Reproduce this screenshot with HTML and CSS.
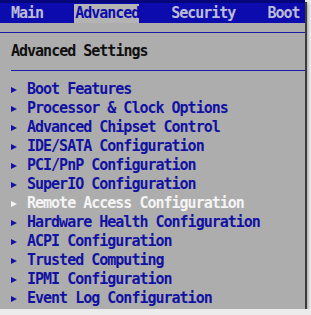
FILE: index.html
```html
<!DOCTYPE html>
<html lang="en">
<head>
  <meta charset="UTF-8">
  <meta name="viewport" content="width=device-width, initial-scale=1">
  <title>BIOS Setup - Advanced</title>
  <link rel="stylesheet" href="styles.css">
</head>
<body>
  <div class="screen">
    <!-- Top menu -->
    <div class="tabs">
      <span class="tab">Main</span>
      <span class="tab active">Advanced</span>
      <span class="tab">Security</span>
      <span class="tab">Boot</span>
    </div>
    <div class="rule"></div>
    <h1 class="title">Advanced Settings</h1>
    <div class="rule inset"></div>
    <!-- Submenus -->
    <ul class="menu">
      <li class="item">Boot Features</li>
      <li class="item">Processor &amp; Clock Options</li>
      <li class="item">Advanced Chipset Control</li>
      <li class="item">IDE/SATA Configuration</li>
      <li class="item">PCI/PnP Configuration</li>
      <li class="item">SuperIO Configuration</li>
      <li class="item selected">Remote Access Configuration</li>
      <li class="item">Hardware Health Configuration</li>
      <li class="item">ACPI Configuration</li>
      <li class="item">Trusted Computing</li>
      <li class="item">IPMI Configuration</li>
      <li class="item">Event Log Configuration</li>
    </ul>
  </div>
</body>
</html>
```

FILE: styles.css
```css
body {
  margin: 0;
  padding: 0;
  background-color: #ececec;
  font-family: "DejaVu Sans Mono", "Liberation Mono", monospace;
  font-size: 15px;
  font-weight: bold;
  line-height: 19px;
  letter-spacing: -1px;
}
.screen {
  width: 305px;
  height: 309px;
  background-color: #adadad;
  box-shadow: 2px 2px 0 #3c3c3c, 3px 3px 3px rgba(0, 0, 0, 0.35);
  overflow: hidden;
}
.tabs {
  display: flex;
  gap: 32px;
  height: 19px;
  padding: 4px 0 0 11px;
  background-color: #0c0cae;
  border-top: 0;
  box-shadow: inset 0 3px 0 #06067a;
}
.tab {
  color: #bcbcd8;
  white-space: nowrap;
}
.tab.active {
  width: 64px;
  margin-left: -1px;
  padding-left: 1px;
  background-color: #b4b4b4;
  color: #0c0cae;
}
.rule {
  height: 1px;
  margin-top: 9px;
  background-color: #1a1aa6;
}
.rule.inset {
  margin-left: 11px;
}
.title {
  margin: 9px 0 0 11px;
  font-size: 15px;
  font-weight: bold;
  color: #101010;
}
.menu {
  list-style: none;
  margin: 9px 0 0;
  padding: 0;
}
.item {
  display: flex;
  align-items: center;
  height: 19px;
  padding-left: 11px;
  color: #1212a2;
  white-space: nowrap;
}
.item::before {
  content: "";
  width: 0;
  height: 0;
  margin: 0 10px 0 0;
  border-left: 6px solid currentColor;
  border-top: 3.5px solid transparent;
  border-bottom: 3.5px solid transparent;
}
.item.selected {
  color: #f4f4f4;
}
```
